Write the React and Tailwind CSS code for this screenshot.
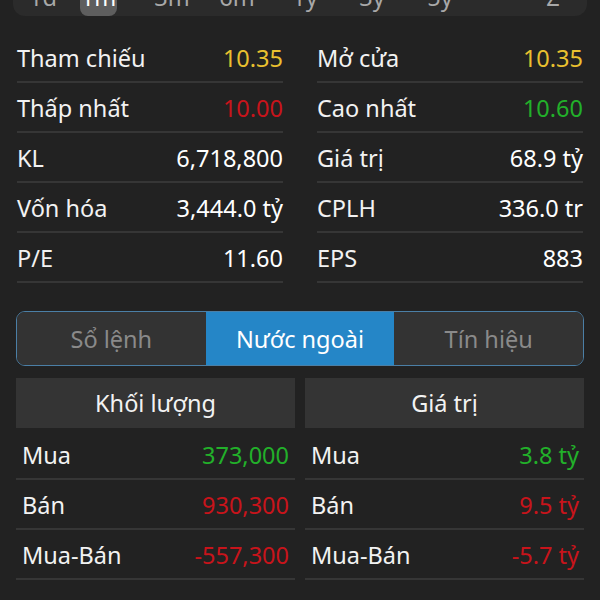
import React from "react";

const font = { fontFamily: '"Noto Sans", "Open Sans", sans-serif' };

const periods = [
  { t: "1d", cls: "ml-0 w-[60px]" },
  { t: "1m", cls: "ml-[7px] w-[37px]", sel: true },
  { t: "3m", cls: "ml-[23px] w-[64px]" },
  { t: "6m", cls: "ml-[1px] w-[64px]" },
  { t: "1y", cls: "ml-[4px] w-[64px]" },
  { t: "3y", cls: "ml-[3px] w-[64px]" },
  { t: "5y", cls: "ml-[4px] w-[64px]" },
  { t: "Z", cls: "ml-[49px] w-[64px]" },
];

const stats = [
  ["Tham chiếu", "10.35", "text-[#e9c02f]", "Mở cửa", "10.35", "text-[#e9c02f]"],
  ["Thấp nhất", "10.00", "text-[#c8141b]", "Cao nhất", "10.60", "text-[#22b02a]"],
  ["KL", "6,718,800", "text-white", "Giá trị", "68.9 tỷ", "text-white"],
  ["Vốn hóa", "3,444.0 tỷ", "text-white", "CPLH", "336.0 tr", "text-white"],
  ["P/E", "11.60", "text-white", "EPS", "883", "text-white"],
];

function StatRow({ label, value, color }) {
  return (
    <div className="h-[50px] pt-[3px] border-b-[2px] border-[#363636] flex items-center justify-between">
      <span className="text-[#f2f2f2]">{label}</span>
      <span className={color}>{value}</span>
    </div>
  );
}

function FlowCol({ title, rows, pad }) {
  return (
    <div className="flex flex-col">
      <div className="h-[50px] pt-[2px] bg-[#343434] flex items-center justify-center text-[#f2f2f2]">
        {title}
      </div>
      <div className="mt-[2px]">
        {rows.map(([l, v, c]) => (
          <div
            key={l}
            className={`h-[50px] pt-[3px] border-b-[2px] border-[#363636] flex items-center justify-between ${pad}`}
          >
            <span className="text-[#f2f2f2]">{l}</span>
            <span className={c}>{v}</span>
          </div>
        ))}
      </div>
    </div>
  );
}

export default function App() {
  return (
    <div className="w-[600px] h-[600px] overflow-hidden bg-[#222222] text-[23.5px]" style={font}>
      {/* period selector (cut at top) */}
      <div className="h-[16px] overflow-hidden mx-[13px] rounded-b-[12px] bg-[#2b2b2b] flex">
        {periods.map((p) => (
          <div
            key={p.t}
            className={`${p.cls} shrink-0 flex justify-center ${
              p.sel ? "bg-[#5e5e5e] rounded-b-[8px] text-white" : "text-[#a8a8a8]"
            }`}
          >
            <span className="block -mt-[22px] leading-[38px] h-[38px]">{p.t}</span>
          </div>
        ))}
      </div>

      {/* stats */}
      <div className="mt-[17px] px-[17px] grid grid-cols-2 gap-x-[34px]">
        <div className="flex flex-col">
          {stats.map((r) => (
            <StatRow key={r[0]} label={r[0]} value={r[1]} color={r[2]} />
          ))}
        </div>
        <div className="flex flex-col">
          {stats.map((r) => (
            <StatRow key={r[3]} label={r[3]} value={r[4]} color={r[5]} />
          ))}
        </div>
      </div>

      {/* tabs */}
      <div className="mt-[28px] mx-[16px] h-[55px] pt-[2px] rounded-[9px] border border-[#4b7fa6] overflow-hidden grid grid-cols-3">
        <div className="bg-[#333333] -mt-[2px] pt-[2px] flex items-center justify-center text-[#8a8a8a]">Sổ lệnh</div>
        <div className="bg-[#2586c7] -mt-[2px] pt-[2px] flex items-center justify-center text-white">Nước ngoài</div>
        <div className="bg-[#333333] -mt-[2px] pt-[2px] flex items-center justify-center text-[#8a8a8a]">Tín hiệu</div>
      </div>

      {/* foreign flow */}
      <div className="mt-[12px] mx-[16px] grid grid-cols-2 gap-x-[10px]">
        <FlowCol
          title="Khối lượng"
          pad="pl-[6px] pr-[6px]"
          rows={[
            ["Mua", "373,000", "text-[#22b02a]"],
            ["Bán", "930,300", "text-[#c8141b]"],
            ["Mua-Bán", "-557,300", "text-[#c8141b]"],
          ]}
        />
        <FlowCol
          title="Giá trị"
          pad="pl-[6px] pr-[5px]"
          rows={[
            ["Mua", "3.8 tỷ", "text-[#22b02a]"],
            ["Bán", "9.5 tỷ", "text-[#c8141b]"],
            ["Mua-Bán", "-5.7 tỷ", "text-[#c8141b]"],
          ]}
        />
      </div>
    </div>
  );
}
